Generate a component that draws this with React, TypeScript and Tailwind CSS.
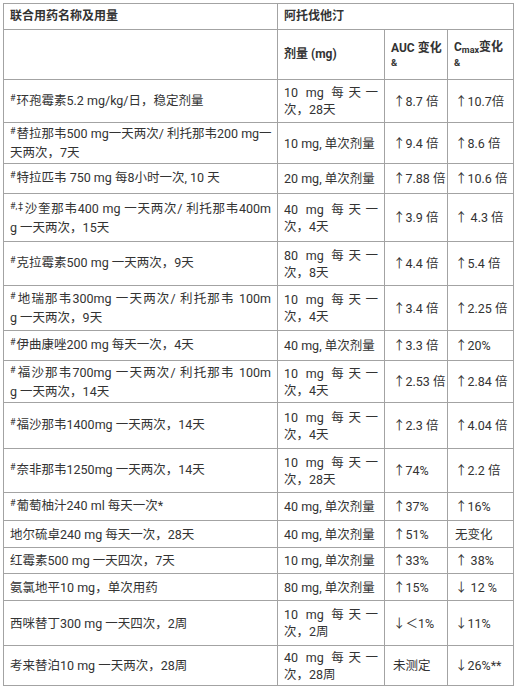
import React from "react";

type Row = {
  sup?: string;
  left: string[];
  dose: string[];
  auc: string;
  cmax: string;
  h: string;
};

const rows: Row[] = [
  { sup: "#", left: ["环孢霉素5.2 mg/kg/日，稳定剂量"], dose: ["10 mg 每天一", "次，28天"], auc: "↑8.7 倍", cmax: "↑10.7倍", h: "h-[43px]" },
  { sup: "#", left: ["替拉那韦500 mg一天两次/ 利托那韦200 mg一", "天两次，7天"], dose: ["10 mg, 单次剂量"], auc: "↑9.4 倍", cmax: "↑8.6 倍", h: "h-[41px]" },
  { sup: "#", left: ["特拉匹韦 750 mg 每8小时一次, 10 天"], dose: ["20 mg, 单次剂量"], auc: "↑7.88 倍", cmax: "↑10.6 倍", h: "h-[30px]" },
  { sup: "#,‡", left: ["沙奎那韦400 mg 一天两次/ 利托那韦400m", "g 一天两次，15天"], dose: ["40 mg 每天一", "次，4天"], auc: "↑3.9 倍", cmax: "↑ 4.3 倍", h: "h-[48px]" },
  { sup: "#", left: ["克拉霉素500 mg 一天两次，9天"], dose: ["80 mg 每天一", "次，8天"], auc: "↑4.4 倍", cmax: "↑5.4 倍", h: "h-[44px]" },
  { sup: "#", left: ["地瑞那韦300mg 一天两次/ 利托那韦 100m", "g 一天两次，9天"], dose: ["10 mg 每天一", "次，4天"], auc: "↑3.4 倍", cmax: "↑2.25 倍", h: "h-[45px]" },
  { sup: "#", left: ["伊曲康唑200 mg 每天一次，4天"], dose: ["40 mg, 单次剂量"], auc: "↑3.3 倍", cmax: "↑20%", h: "h-[30px]" },
  { sup: "#", left: ["福沙那韦700mg 一天两次/ 利托那韦 100m", "g 一天两次，14天"], dose: ["10 mg 每天一", "次，4天"], auc: "↑2.53 倍", cmax: "↑2.84 倍", h: "h-[42px]" },
  { sup: "#", left: ["福沙那韦1400mg 一天两次，14天"], dose: ["10 mg 每天一", "次，4天"], auc: "↑2.3 倍", cmax: "↑4.04 倍", h: "h-[46px]" },
  { sup: "#", left: ["奈非那韦1250mg 一天两次，14天"], dose: ["10 mg 每天一", "次，28天"], auc: "↑74%", cmax: "↑2.2 倍", h: "h-[44px]" },
  { sup: "#", left: ["葡萄柚汁240 ml 每天一次*"], dose: ["40 mg, 单次剂量"], auc: "↑37%", cmax: "↑16%", h: "h-[28px]" },
  { left: ["地尔硫卓240 mg 每天一次，28天"], dose: ["40 mg, 单次剂量"], auc: "↑51%", cmax: "无变化", h: "h-[27px]" },
  { left: ["红霉素500 mg 一天四次，7天"], dose: ["10 mg, 单次剂量"], auc: "↑33%", cmax: "↑ 38%", h: "h-[26px]" },
  { left: ["氨氯地平10 mg，单次用药"], dose: ["80 mg, 单次剂量"], auc: "↑15%", cmax: "↓ 12 %", h: "h-[27px]" },
  { left: ["西咪替丁300 mg 一天四次，2周"], dose: ["10 mg 每天一", "次，2周"], auc: "↓＜1%", cmax: "↓11%", h: "h-[45px]" },
  { left: ["考来替泊10 mg 一天两次，28周"], dose: ["40 mg 每天一", "次，28周"], auc: "未测定", cmax: "↓26%**", h: "h-[40px]" },
];

function Lines({ lines, sup }: { lines: string[]; sup?: string }) {
  return (
    <>
      {lines.map((l, i) => (
        <div
          key={i}
          className={
            i < lines.length - 1
              ? "text-justify [text-align-last:justify] whitespace-nowrap"
              : "whitespace-nowrap"
          }
        >
          {i === 0 && sup ? (
            <span className="text-[9px] relative -top-[4px] mr-[1px]">{sup}</span>
          ) : null}
          {l}
        </div>
      ))}
    </>
  );
}

const td = "border border-[#a3a3a3] align-middle px-[6px] py-0";

export default function App() {
  return (
    <div
      className="bg-white w-[518px] h-[689px] overflow-hidden text-[#333333]"
      style={{ fontFamily: 'Roboto, "Noto Sans CJK SC", sans-serif' }}
    >
      <table className="ml-[3px] mt-[3px] border-collapse table-fixed w-[510px] text-[12.5px] leading-[17px]">
        <colgroup>
          <col className="w-[274px]" />
          <col className="w-[107px]" />
          <col className="w-[63px]" />
          <col className="w-[66px]" />
        </colgroup>
        <thead>
          <tr className="h-[26px]">
            <th className={`${td} text-left font-bold text-[12px]`}>联合用药名称及用量</th>
            <th colSpan={3} className={`${td} text-left font-bold text-[12px]`}>
              阿托伐他汀
            </th>
          </tr>
          <tr className="h-[50px]">
            <th className={td}></th>
            <th className={`${td} text-left font-bold text-[12px]`}>剂量 (mg)</th>
            <th className={`${td} text-left font-bold text-[12px] leading-[16px]`}>
              <div className="text-justify [text-align-last:justify] whitespace-nowrap">AUC 变化</div>
              <div className="text-[9.5px] leading-[14px]">&amp;</div>
            </th>
            <th className={`${td} text-left font-bold text-[12px] leading-[16px] px-[5px]`}>
              <div className="whitespace-nowrap">
                C<span className="text-[9px] relative top-[2px]">max</span>变化
              </div>
              <div className="text-[9.5px] leading-[14px]">&amp;</div>
            </th>
          </tr>
        </thead>
        <tbody>
          {rows.map((r, i) => (
            <tr key={i} className={r.h}>
              <td className={`${td} px-[5px]`}>
                <Lines lines={r.left} sup={r.sup} />
              </td>
              <td className={td}>
                <Lines lines={r.dose} />
              </td>
              <td className={`${td} pl-[8px] pr-0 whitespace-nowrap`}>{r.auc}</td>
              <td className={`${td} pl-[7px] pr-0 whitespace-nowrap`}>{r.cmax}</td>
            </tr>
          ))}
        </tbody>
      </table>
    </div>
  );
}
